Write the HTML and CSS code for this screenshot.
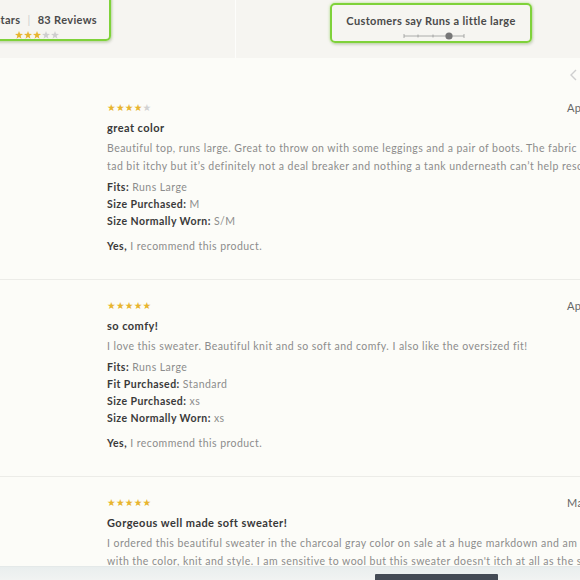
FILE: index.html
```html
<!DOCTYPE html>
<html>
<head>
<meta charset="utf-8">
<link rel="stylesheet" href="styles.css">
</head>
<body>
<div class="page">
  <header class="summary">
    <div class="cell cell-left">
      <div class="hl hl-left">
        <div class="hl-text">3.7 Stars <span class="pipe">|</span> 83 Reviews</div>
        <svg class="stars-top" width="44" height="8" viewBox="0 0 44 8">
          <defs>
            <polygon id="st" points="4,0 5,2.8 8,2.9 5.6,4.8 6.5,7.8 4,6 1.5,7.8 2.4,4.8 0,2.9 3,2.8"/>
            <clipPath id="half"><rect x="27" y="0" width="4.2" height="8"/></clipPath>
          </defs>
          <use href="#st" x="0" fill="#e8b52e"/>
          <use href="#st" x="9" fill="#e8b52e"/>
          <use href="#st" x="18" fill="#e8b52e"/>
          <use href="#st" x="27" fill="#cfcfcf"/>
          <use href="#st" x="27" fill="#e8b52e" clip-path="url(#half)"/>
          <use href="#st" x="36" fill="#cfcfcf"/>
        </svg>
      </div>
    </div>
    <div class="cell cell-right">
      <div class="hl hl-right">
        <div class="hl-text">Customers say Runs a little large</div>
        <svg class="slider" width="62" height="10" viewBox="0 0 62 10">
          <line x1="1" y1="5" x2="61" y2="5" stroke="#9a9a9a" stroke-width="0.8"/>
          <line x1="1" y1="3" x2="1" y2="7" stroke="#9a9a9a" stroke-width="0.8"/>
          <line x1="15" y1="3.5" x2="15" y2="6.5" stroke="#9a9a9a" stroke-width="0.8"/>
          <line x1="30" y1="3.5" x2="30" y2="6.5" stroke="#9a9a9a" stroke-width="0.8"/>
          <line x1="61" y1="3" x2="61" y2="7" stroke="#9a9a9a" stroke-width="0.8"/>
          <circle cx="46" cy="5" r="3.6" fill="#777"/>
        </svg>
      </div>
    </div>
  </header>

  <main class="reviews">
    <svg class="chev" width="8" height="12" viewBox="0 0 8 12"><polyline points="7,1 2,6 7,11" fill="none" stroke="#cfcfcf" stroke-width="1.4"/></svg>

    <article class="review rv-1">
      <div class="rv-head">
        <span class="stars"><span class="on">★★★★</span><span class="off">★</span></span>
        <span class="date">Apr 12, 2019</span>
      </div>
      <h3 class="rv-title">great color</h3>
      <p class="rv-body">Beautiful top, runs large. Great to throw on with some leggings and a pair of boots. The fabric is a<br>tad bit itchy but it’s definitely not a deal breaker and nothing a tank underneath can’t help resolve.</p>
      <ul class="attrs">
        <li><b>Fits:</b> Runs Large</li>
        <li><b>Size Purchased:</b> M</li>
        <li><b>Size Normally Worn:</b> S/M</li>
      </ul>
      <p class="rec"><b>Yes,</b> I recommend this product.</p>
    </article>

    <article class="review rv-2">
      <div class="rv-head">
        <span class="stars"><span class="on">★★★★★</span></span>
        <span class="date">Apr 3, 2019</span>
      </div>
      <h3 class="rv-title">so comfy!</h3>
      <p class="rv-body">I love this sweater. Beautiful knit and so soft and comfy. I also like the oversized fit!</p>
      <ul class="attrs">
        <li><b>Fits:</b> Runs Large</li>
        <li><b>Fit Purchased:</b> Standard</li>
        <li><b>Size Purchased:</b> xs</li>
        <li><b>Size Normally Worn:</b> xs</li>
      </ul>
      <p class="rec"><b>Yes,</b> I recommend this product.</p>
    </article>

    <article class="review rv-3">
      <div class="rv-head">
        <span class="stars"><span class="on">★★★★★</span></span>
        <span class="date">Mar 28, 2019</span>
      </div>
      <h3 class="rv-title">Gorgeous well made soft sweater!</h3>
      <p class="rv-body">I ordered this beautiful sweater in the charcoal gray color on sale at a huge markdown and am in love<br>with the color, knit and style. I am sensitive to wool but this sweater doesn't itch at all as the seller said.</p>
    </article>
  </main>

  <footer class="bar">
    <div class="btn"></div>
  </footer>
</div>
</body>
</html>
```

FILE: styles.css
```css
* { box-sizing: border-box; }
html, body { margin: 0; padding: 0; }
body {
  width: 580px;
  height: 580px;
  overflow: hidden;
  background: #fcfcf8;
  font-family: Lato, "Open Sans", sans-serif;
  color: #8a8a8a;
}
.page {
  width: 580px;
  height: 580px;
  display: flex;
  flex-direction: column;
  overflow: hidden;
  position: relative;
}
.summary {
  height: 58px;
  flex: 0 0 58px;
  display: flex;
  background: #f6f5f1;
}
.cell { height: 100%; }
.cell-left {
  flex: 0 0 236px;
  border-right: 1px solid #fdfdfb;
}
.cell-right {
  flex: 0 0 400px;
  display: flex;
  justify-content: flex-start;
}
.hl {
  border: 2px solid #7fd23a;
  border-radius: 5px;
  box-shadow: 0 0 3px rgba(127, 210, 58, 0.6), 1px 2px 3px rgba(0,0,0,0.12);
  display: flex;
  flex-direction: column;
  align-items: center;
}
.hl-text {
  font-size: 11px;
  font-weight: 700;
  color: #4a4a4a;
  letter-spacing: 0.35px;
  white-space: nowrap;
}
.hl-left {
  margin-left: -60px;
  margin-top: -8px;
  width: 171px;
  height: 49px;
  padding-top: 19px;
  align-items: flex-end;
  padding-right: 12px;
}
.pipe { color: #cfcfcf; font-weight: 400; margin: 0 4px; }
.stars-top { margin-top: 5px; margin-right: 38px; display: block; }
.hl-right {
  margin-left: 94px;
  margin-top: 3px;
  width: 202px;
  height: 40px;
  padding-top: 9px;
}
.slider { display: block; margin-top: 4px; margin-left: 6px; }

.reviews {
  flex: 1 1 auto;
  position: relative;
}
.chev { position: absolute; left: 569px; top: 11px; }
.review {
  width: 680px;
  border-bottom: 1px solid #ececE8;
  padding-left: 107px;
}
.rv-1 { padding-top: 43px; height: 222px; }
.rv-2 { padding-top: 19px; height: 197px; }
.rv-3 { padding-top: 19px; border-bottom: none; }
.rv-head {
  display: grid;
  grid-template-columns: 460px auto;
  align-items: center;
  height: 12px;
}
.stars {
  font-family: "DejaVu Sans", sans-serif;
  font-size: 9.7px;
  letter-spacing: 0.2px;
  line-height: 12px;
  white-space: nowrap;
}
.on { color: #e8b52e; }
.off { color: #d2d2d2; }
.date { font-size: 11px; color: #666; letter-spacing: 0.4px; white-space: nowrap; }
.rv-title {
  margin: 8px 0 0;
  font-size: 11px;
  font-weight: 700;
  color: #383838;
  letter-spacing: 0.45px;
  line-height: 14px;
}
.rv-body {
  margin: 4px 0 0;
  font-size: 10.5px;
  line-height: 18px;
  letter-spacing: 0.45px;
  white-space: nowrap;
  color: #8c8c8c;
}
.attrs {
  list-style: none;
  margin: 4px 0 0;
  padding: 0;
  font-size: 10.5px;
  line-height: 17px;
  letter-spacing: 0.45px;
  color: #8c8c8c;
}
.attrs b, .rec b { color: #3a3a3a; font-weight: 700; }
.rec {
  margin: 8px 0 0;
  font-size: 10.5px;
  line-height: 17px;
  letter-spacing: 0.45px;
  color: #8c8c8c;
}
.bar {
  position: absolute;
  left: 0;
  right: 0;
  bottom: 0;
  height: 14px;
  background: linear-gradient(#e9eeee, #f1f3f2);
  border-top: 1px solid #e4e9e9;
}
.btn {
  position: absolute;
  left: 375px;
  top: 7px;
  width: 123px;
  height: 10px;
  background: #444b55;
  border-radius: 1px;
}
```
